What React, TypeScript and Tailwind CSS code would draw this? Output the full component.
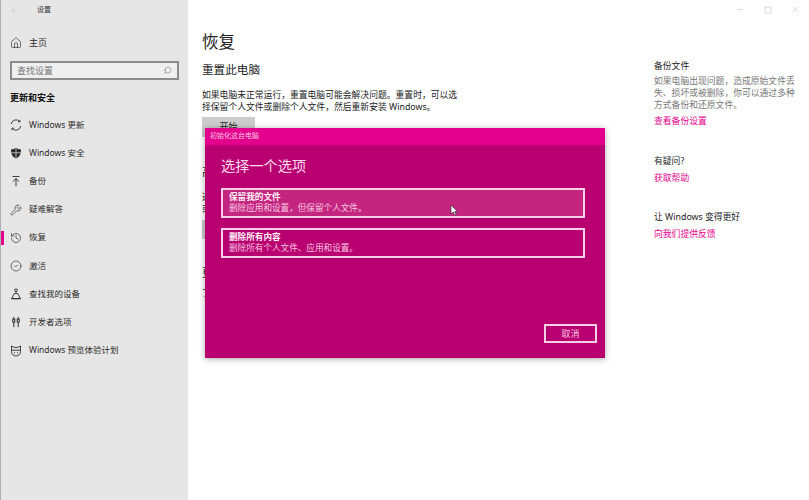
import React from "react";
import { ArrowLeft, Minus, Square, X, Home, Search, Wrench, History, CircleCheck } from "lucide-react";

const cjk = "font-['Noto_Sans','Noto_Sans_CJK_SC',sans-serif]";

const UpdateIcon = () => (
  <svg viewBox="0 0 12 12" className="h-3 w-3" fill="none" stroke="currentColor" strokeWidth="0.9">
    <path d="M1.2 5A4.9 4.9 0 0 1 9.8 2.6M10.8 7A4.9 4.9 0 0 1 2.2 9.4" />
    <path d="M10 .8v2H8M2 11.2v-2h2" />
  </svg>
);

const ShieldIcon = () => (
  <svg viewBox="0 0 12 12" className="h-3 w-3">
    <path d="M6 .8C7.6 1.9 9.2 2.4 11 2.5c0 4.2-1 7.2-5 8.9-4-1.700-5-4.700-5-8.900C2.800 2.400 4.400 1.900 6 .8Z" fill="currentColor" />
    <path d="M6 1v10M1.200 5.800h9.600" stroke="#e6e6e6" strokeWidth="0.7" />
  </svg>
);

const BackupIcon = () => (
  <svg viewBox="0 0 12 12" className="h-3 w-3" fill="none" stroke="currentColor" strokeWidth="0.9">
    <path d="M2.500 1.500h7M6 11.200V3.500M2.800 6.600 6 3.500l3.200 3.100" />
  </svg>
);

const FindIcon = () => (
  <svg viewBox="0 0 12 12" className="h-3 w-3" fill="none" stroke="currentColor" strokeWidth="0.9">
    <circle cx="6" cy="2.200" r="1.300" />
    <path d="M6 3.500v2M4.300 5.500h3.400l2.600 5h-8.600ZM1 10.800h10" />
  </svg>
);

const DevIcon = () => (
  <svg viewBox="0 0 12 12" className="h-3 w-3" fill="none" stroke="currentColor" strokeWidth="1">
    <path d="M3.800.8v2.400M8.200.8v2.400M3.800 6v5.200M8.200 6v5.200" />
    <rect x="2.800" y="3.200" width="2" height="2.800" />
    <rect x="7.200" y="3.200" width="2" height="2.800" />
  </svg>
);

const InsiderIcon = () => (
  <svg viewBox="0 0 12 12" className="h-3 w-3" fill="none" stroke="currentColor" strokeWidth="0.9">
    <path d="M1.500 1 4 2.400h4L10.500 1v5.500c0 2.600-2 4.500-4.500 4.500S1.500 9.100 1.500 6.500Z" />
    <path d="M1.500 5.200h9M4 7.500l1 .6M8 7.500l-1 .6" />
  </svg>
);

const nav = [
  { icon: <UpdateIcon />, label: "Windows 更新" },
  { icon: <ShieldIcon />, label: "Windows 安全" },
  { icon: <BackupIcon />, label: "备份" },
  { icon: <Wrench className="h-3 w-3" strokeWidth={1.3} />, label: "疑难解答" },
  { icon: <History className="h-3 w-3" strokeWidth={1.3} />, label: "恢复", active: true },
  { icon: <CircleCheck className="h-3 w-3" strokeWidth={1.3} />, label: "激活" },
  { icon: <FindIcon />, label: "查找我的设备" },
  { icon: <DevIcon />, label: "开发者选项" },
  { icon: <InsiderIcon />, label: "Windows 预览体验计划" },
];

const options = [
  { title: "保留我的文件", text: "删除应用和设置，但保留个人文件。", hover: true },
  { title: "删除所有内容", text: "删除所有个人文件、应用和设置。", hover: false },
];

export default function App() {
  return (
    <div className={`relative flex h-[500px] w-[809px] overflow-hidden bg-white text-[#1f1f1f] ${cjk}`}>
      <aside className="flex h-full w-[188px] shrink-0 flex-col border-l border-[#b0b0b0] bg-[#e6e6e6] text-[#2b2b2b]">
        <div className="flex h-[19px] items-center pl-[9px] pt-[1px]">
          <ArrowLeft className="h-[9px] w-[9px] text-[#c4c4c4]" strokeWidth={1.5} />
          <span className="ml-[18px] text-[7px] text-[#333]">设置</span>
        </div>
        <div className="mt-[15px] flex h-[18px] items-center pl-[9px]">
          <Home className="h-3 w-3" strokeWidth={1.3} />
          <span className="ml-[7px] text-[9px]">主页</span>
        </div>
        <div className="ml-[9px] mt-[9px] flex h-[19px] w-[169px] items-center justify-between border-2 border-[#8c8c8c] bg-[#efefef] px-[5px]">
          <span className="text-[9px] text-[#777]">查找设置</span>
          <Search className="h-[9px] w-[9px] -scale-x-100 text-[#777]" strokeWidth={1.5} />
        </div>
        <h2 className="ml-[9px] mt-[10px] h-[16px] text-[9px] font-bold leading-[16px] text-[#111]">更新和安全</h2>
        <nav className="mt-[5px] flex flex-col">
          {nav.map((item) => (
            <div key={item.label} className="relative flex h-[28.2px] items-center pl-[9px]">
              {item.active && <span className="absolute left-0 top-[7px] h-[14px] w-[3px] bg-[#e3008c]" />}
              {item.icon}
              <span className="ml-[7px] text-[8.5px]">{item.label}</span>
            </div>
          ))}
        </nav>
      </aside>

      <main className="ml-[14px] w-[258px] shrink-0 pt-[30px]">
        <h1 className="text-[16.500px] leading-[24px]">恢复</h1>
        <h2 className="mt-[7px] text-[11.600px] leading-[18px]">重置此电脑</h2>
        <p className="mt-[11px] text-[8.800px] leading-[11.500px] text-[#222]">
          如果电脑未正常运行，重置电脑可能会解决问题。重置时，可以选择保留个人文件或删除个人文件，然后重新安装 Windows。
        </p>
        <div className="mt-[4px] flex h-[20px] w-[53px] items-center justify-center bg-[#cccccc] text-[9px]">开始</div>
        <h2 className="mt-[26px] text-[11.600px] leading-[18px]">高级启动</h2>
        <p className="mt-[11px] text-[8.800px] leading-[11.500px]">
          通过设备或磁盘(如 U 盘或 DVD)启动，更改 Windows 启动设置，或者从系统映像还原 Windows。这将重新启动电脑。
        </p>
        <div className="mt-[5px] flex h-[19px] w-[53px] items-center justify-center bg-[#cccccc] text-[9px]">立即重启</div>
        <h2 className="mt-[25px] text-[11.600px] leading-[18px]">更多恢复选项</h2>
        <p className="mt-[6px] text-[8.800px] leading-[11.500px] text-[#222]">了解如何进行 Windows 的全新安装以便开始全新的体验</p>
      </main>

      <aside className="ml-[194px] w-[143px] shrink-0 pt-[60px] text-[8.800px] leading-[12px]">
        <h3 className="text-[#222]">备份文件</h3>
        <p className="mt-[3px] text-[#777]">
          如果电脑出现问题，造成原始文件丢失、损坏或被删除，你可以通过多种方式备份和还原文件。
        </p>
        <a className="mt-[4px] block text-[#e3008c]">查看备份设置</a>
        <h3 className="mt-[28px] text-[#222]">有疑问?</h3>
        <a className="mt-[5px] block text-[#e3008c]">获取帮助</a>
        <h3 className="mt-[27px] text-[#222]">让 Windows 变得更好</h3>
        <a className="mt-[5px] block text-[#e3008c]">向我们提供反馈</a>
      </aside>

      <div className="absolute right-[9px] top-[5px] flex w-[64px] items-center justify-between text-[#b5b5b5]">
        <Minus className="h-[9px] w-[9px]" strokeWidth={1.2} />
        <Square className="h-[8px] w-[8px]" strokeWidth={1.6} />
        <X className="h-[9px] w-[9px]" strokeWidth={1.2} />
      </div>

      <div className="absolute left-[205px] top-[128px] flex h-[230px] w-[400px] flex-col bg-[#b90070] shadow-[0_1px_6px_rgba(0,0,0,0.35)]">
        <div className="flex h-[17px] items-center bg-[#e3008c] pl-[5px] text-[7px] text-[#f7c6e2]">初始化这台电脑</div>
        <div className="flex flex-1 flex-col px-[16px]">
          <h2 className="mt-[10px] text-[14.200px] leading-[22px] text-[#fbdcef]">选择一个选项</h2>
          <div className="mt-[11px] flex w-[364px] flex-col gap-[10px]">
            {options.map((option) => (
              <div
                key={option.title}
                className={`flex h-[30px] flex-col justify-center border-2 border-[#f6cfe6] pl-[6px] ${option.hover ? "bg-[#c4267f]" : ""}`}
              >
                <div className="text-[8.600px] font-bold leading-[11px] text-[#fff0f8]">{option.title}</div>
                <div className="text-[8.600px] leading-[11px] text-[#f7c6e2]">{option.text}</div>
              </div>
            ))}
          </div>
          <div className="mt-auto mb-[15px] mr-[-8px] flex h-[19px] w-[53px] items-center justify-center self-end border-2 border-[#f6cfe6] text-[9px] text-[#f7c6e2]">取消</div>
        </div>
        <svg viewBox="0 0 8 12" className="absolute left-[245px] top-[76px] h-[12px] w-[8px]">
          <path d="M1 1v9l2.200-2 1.500 3.200 1.400-.7-1.500-3H7.500Z" fill="#fff" stroke="#222" strokeWidth="0.6" />
        </svg>
      </div>
    </div>
  );
}
